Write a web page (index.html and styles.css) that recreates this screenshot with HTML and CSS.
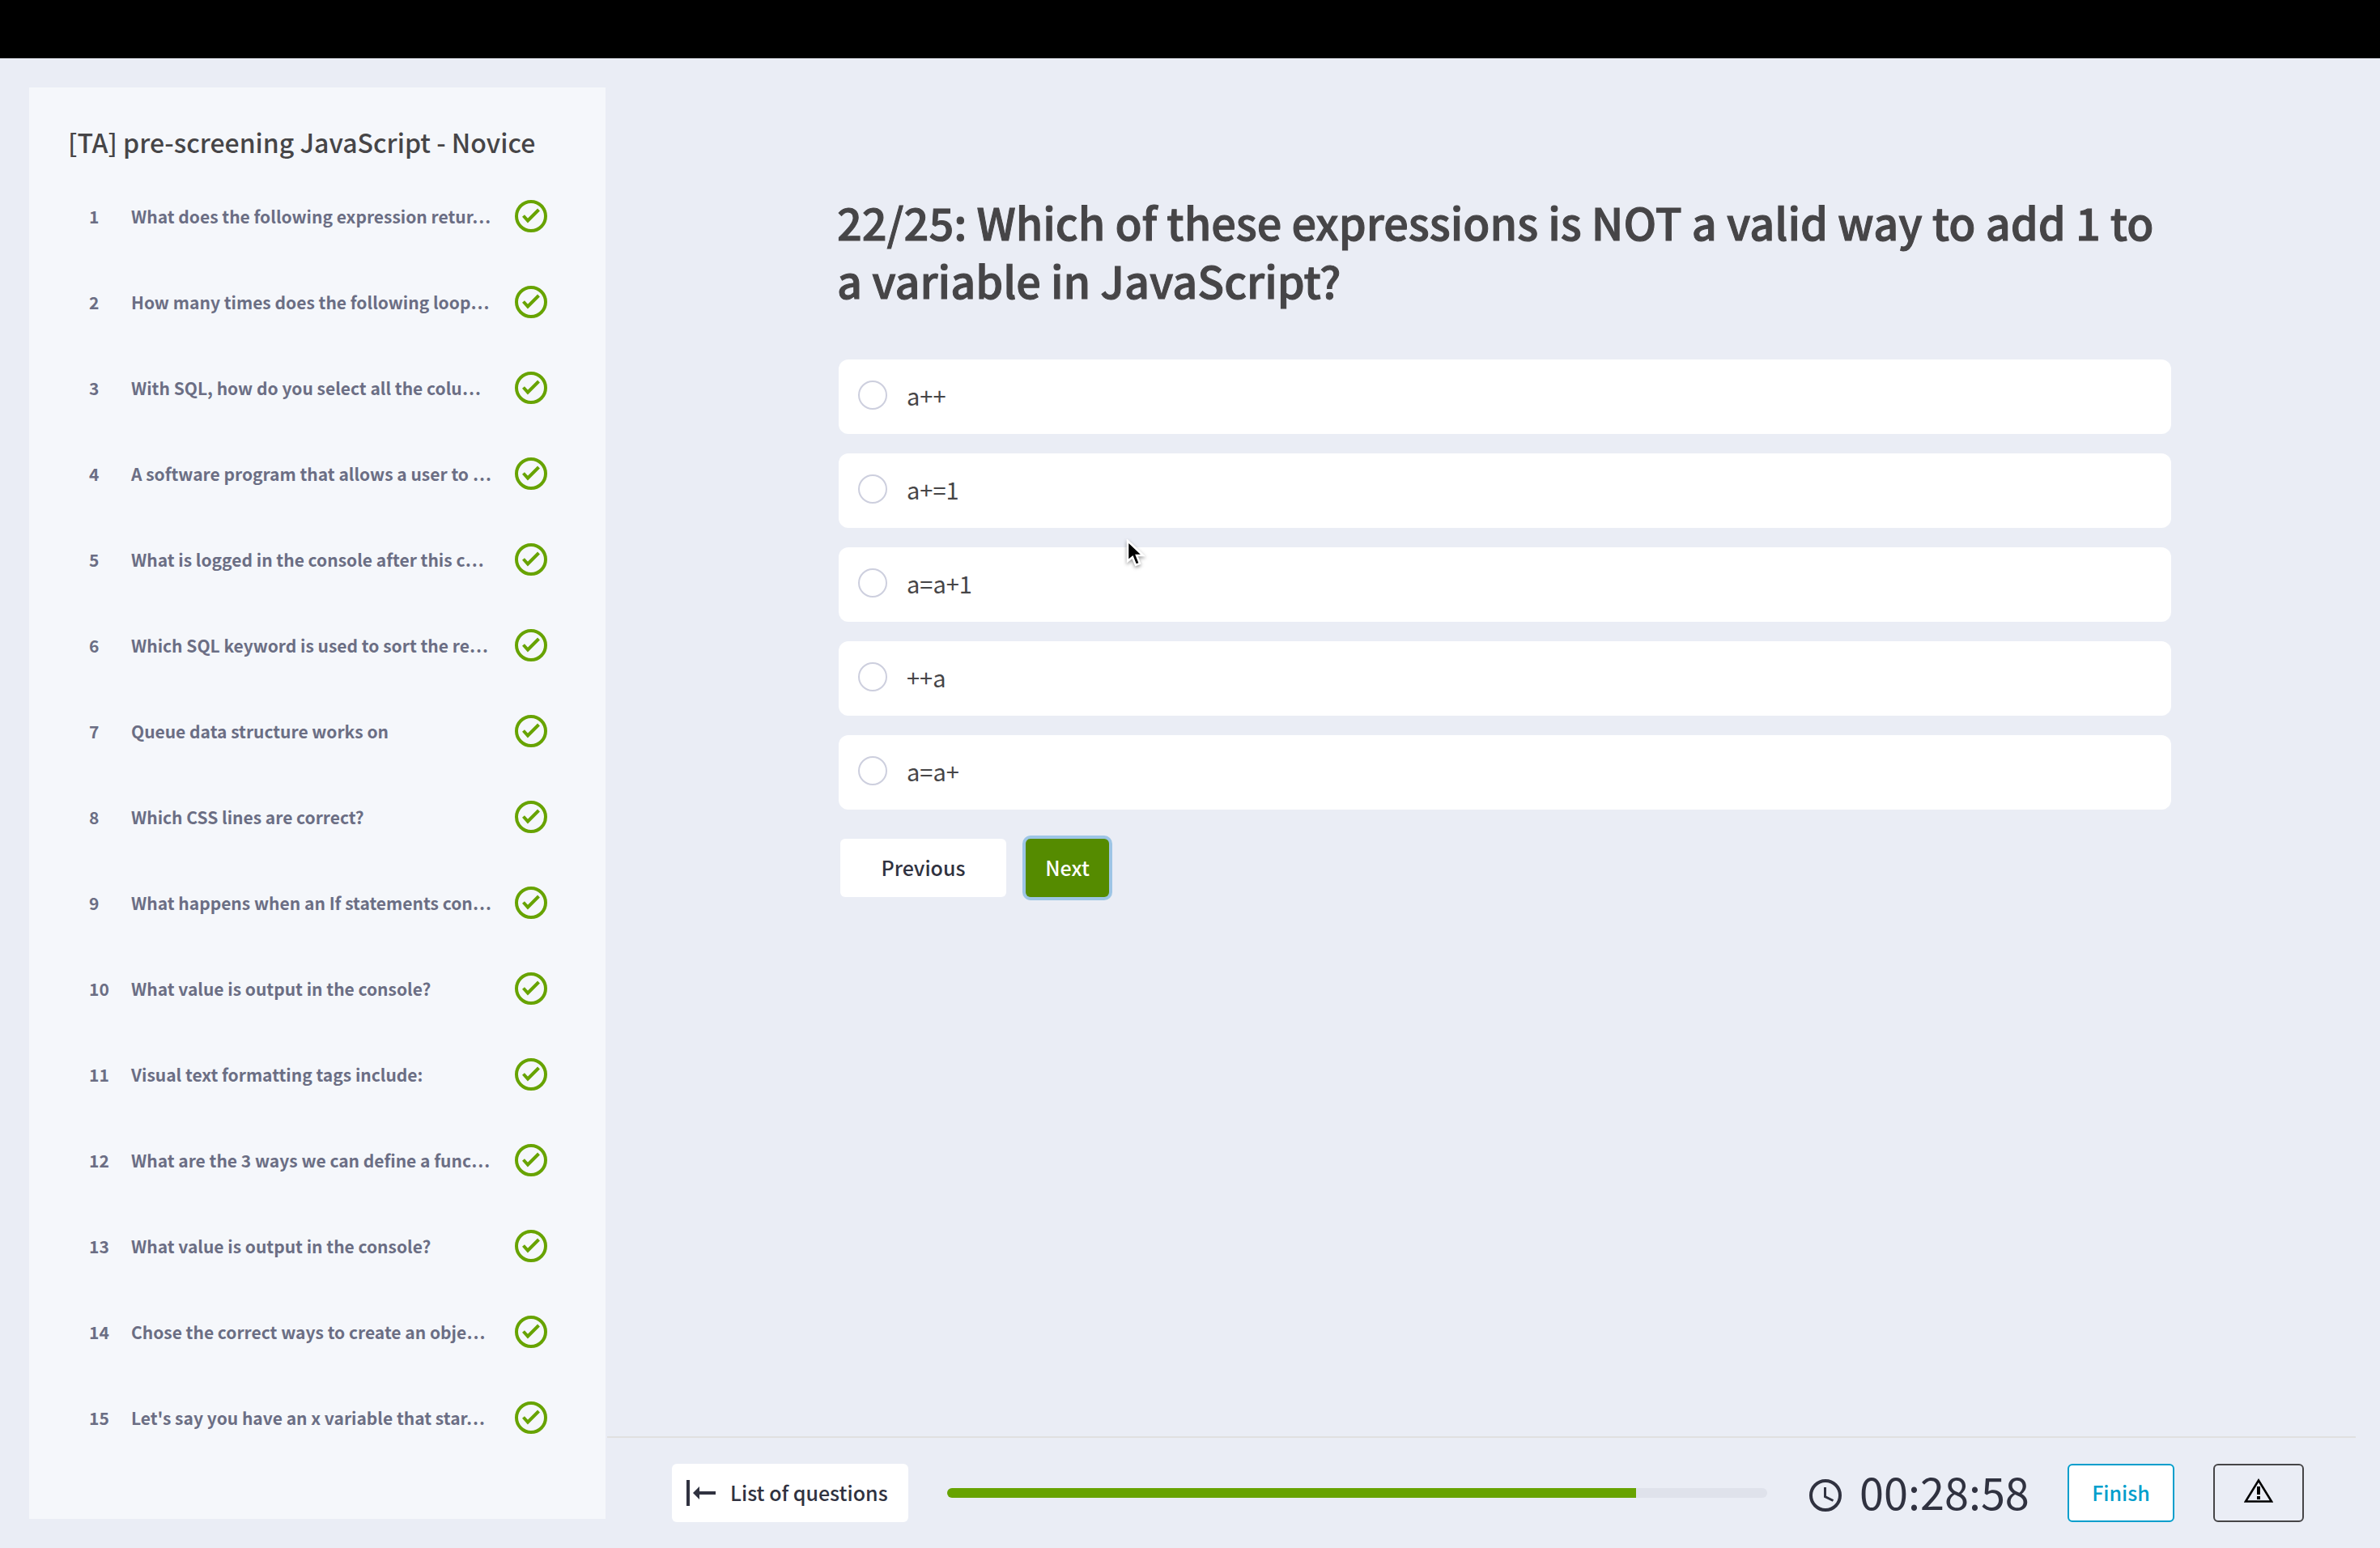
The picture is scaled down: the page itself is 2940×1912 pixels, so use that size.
FILE: index.html
```html
<!DOCTYPE html>
<html lang="en">
<head>
<meta charset="utf-8">
<title>[TA] pre-screening JavaScript - Novice</title>
<link rel="stylesheet" href="styles.css">
</head>
<body>
<svg class="sprite" aria-hidden="true">
  <symbol id="check" viewBox="0 0 40 40"><circle cx="20" cy="20" r="18" fill="none" stroke="currentColor" stroke-width="4"/><path d="M10.500 19.500 16 25.500 29.500 12" fill="none" stroke="currentColor" stroke-width="4"/></symbol>
</svg>
<div class="topbar"></div>
<div class="app">
  <aside class="sidebar">
    <h2 class="test-title">[TA] pre-screening JavaScript - Novice</h2>
    <ol class="questions">
      <li><span class="num">1</span><span class="label">What does the following expression retur…</span><svg class="check"><use href="#check"/></svg></li>
      <li><span class="num">2</span><span class="label">How many times does the following loop…</span><svg class="check"><use href="#check"/></svg></li>
      <li><span class="num">3</span><span class="label">With SQL, how do you select all the colu…</span><svg class="check"><use href="#check"/></svg></li>
      <li><span class="num">4</span><span class="label">A software program that allows a user to …</span><svg class="check"><use href="#check"/></svg></li>
      <li><span class="num">5</span><span class="label">What is logged in the console after this c…</span><svg class="check"><use href="#check"/></svg></li>
      <li><span class="num">6</span><span class="label">Which SQL keyword is used to sort the re…</span><svg class="check"><use href="#check"/></svg></li>
      <li><span class="num">7</span><span class="label">Queue data structure works on</span><svg class="check"><use href="#check"/></svg></li>
      <li><span class="num">8</span><span class="label">Which CSS lines are correct?</span><svg class="check"><use href="#check"/></svg></li>
      <li><span class="num">9</span><span class="label">What happens when an If statements con…</span><svg class="check"><use href="#check"/></svg></li>
      <li><span class="num">10</span><span class="label">What value is output in the console?</span><svg class="check"><use href="#check"/></svg></li>
      <li><span class="num">11</span><span class="label">Visual text formatting tags include:</span><svg class="check"><use href="#check"/></svg></li>
      <li><span class="num">12</span><span class="label">What are the 3 ways we can define a func…</span><svg class="check"><use href="#check"/></svg></li>
      <li><span class="num">13</span><span class="label">What value is output in the console?</span><svg class="check"><use href="#check"/></svg></li>
      <li><span class="num">14</span><span class="label">Chose the correct ways to create an obje…</span><svg class="check"><use href="#check"/></svg></li>
      <li><span class="num">15</span><span class="label">Let's say you have an x variable that star…</span><svg class="check"><use href="#check"/></svg></li>
    </ol>
  </aside>
  <main class="main">
    <section class="question">
      <h1 class="question-title">22/25: Which of these expressions is NOT a valid way to add 1 to a variable in JavaScript?</h1>
      <div class="options">
        <label class="option"><input type="radio" name="answer"><span>a++</span></label>
        <label class="option"><input type="radio" name="answer"><span>a+=1</span></label>
        <label class="option"><input type="radio" name="answer"><span>a=a+1</span></label>
        <label class="option"><input type="radio" name="answer"><span>++a</span></label>
        <label class="option"><input type="radio" name="answer"><span>a=a+</span></label>
      </div>
      <div class="actions">
        <button type="button" class="btn btn-previous">Previous</button>
        <button type="button" class="btn btn-next">Next</button>
      </div>
    </section>
    <footer class="footer">
      <button type="button" class="btn btn-list">
        <svg class="list-icon" viewBox="0 0 36 32" aria-hidden="true"><path d="M0 0h4v32H0zM8 16l8-8v6h20v4H16v6z" fill="currentColor"/></svg>
        List of questions
      </button>
      <div class="progress" role="progressbar" aria-label="Progress" aria-valuenow="84" aria-valuemin="0" aria-valuemax="100"><div class="progress-fill" style="width:84%"></div></div>
      <div class="timer">
        <svg class="clock" viewBox="0 0 40 40" aria-hidden="true"><circle cx="20" cy="20" r="18" fill="none" stroke="currentColor" stroke-width="4"/><path d="M19.500 10v11.500l10 5" fill="none" stroke="currentColor" stroke-width="3"/></svg>
        <span>00:28:58</span>
      </div>
      <button type="button" class="btn btn-finish">Finish</button>
      <button type="button" class="btn btn-report" aria-label="Report a problem">
        <svg class="warning" viewBox="0 0 36 30" aria-hidden="true"><path d="M18 2.500 34 28.500H2z" fill="none" stroke="currentColor" stroke-width="2.500"/><path d="M16 10h4v10h-4zM16 22h4v4h-4z" fill="currentColor"/></svg>
      </button>
    </footer>
  </main>
</div>
<svg class="cursor" viewBox="0 0 24 36" aria-hidden="true"><path d="M2 2v25l6-5 4 10 5-2-4-10h8z" fill="#000" stroke="#fff" stroke-width="2.500"/></svg>
</body>
</html>
```

FILE: styles.css
```css
* { box-sizing: border-box; }

body {
  margin: 0;
  min-height: 100vh;
  display: flex;
  flex-direction: column;
  background: #eaedf5;
  color: #464547;
  font-family: "Noto Sans CJK KR", "Noto Sans", sans-serif;
}

.sprite { display: none; }

.topbar { height: 72px; background: #000; }

.app { flex: 1; display: flex; gap: 2px; padding: 0 30px 0 36px; }

.sidebar {
  flex: 0 0 712px;
  margin: 36px 0;
  padding: 43px 48px 0;
  background: #f5f7fb;
}

.test-title {
  margin: 0;
  font-size: 32px;
  line-height: 48px;
  font-weight: 500;
}

.questions { margin: 21px 0 0; padding: 0; list-style: none; }

.questions li {
  display: flex;
  align-items: flex-start;
  height: 106px;
  padding: 27px 24px 0 26px;
  color: #6b6e84;
  font-size: 21px;
  line-height: 40px;
  font-weight: 600;
}

.num { flex: 0 0 52px; }
.label { flex: 1; white-space: nowrap; }
.check { flex: none; width: 40px; height: 40px; color: #67a300; }

.main { flex: 1; display: flex; flex-direction: column; }

.question { flex: 1; padding: 166px 228px 0 284px; }

.question-title {
  margin: 0;
  font-size: 54px;
  line-height: 72px;
  font-weight: 500;
  -webkit-text-stroke: 1px currentColor;
}

.options { display: grid; gap: 24px; margin: 62px 0 0 2px; }

.option {
  display: flex;
  align-items: flex-start;
  gap: 24px;
  height: 92px;
  padding: 26px 24px;
  border-radius: 12px;
  background: #fff;
  font-size: 29px;
  line-height: 36px;
}

.option input {
  appearance: none;
  flex: none;
  width: 36px;
  height: 36px;
  margin: 0;
  border: 2px solid #cdcfde;
  border-radius: 50%;
  background: #fff;
}

.actions { display: flex; gap: 24px; margin: 36px 4px 0; }

.btn {
  height: 72px;
  padding: 0 0 2px;
  border: 0;
  border-radius: 6px;
  background: #fff;
  color: #303240;
  font-family: inherit;
  font-size: 25px;
  line-height: 36px;
  font-weight: 500;
}

.btn-previous { width: 205px; }
.btn-next { width: 103px; background: #558b00; color: #fff; box-shadow: 0 0 0 4px #9dc5e5; }

.footer {
  display: flex;
  align-items: center;
  padding: 32px 64px 32px 80px;
  border-top: 2px solid #e0e0e0;
}

.btn-list {
  flex: none;
  display: flex;
  align-items: center;
  gap: 18px;
  width: 292px;
  padding-left: 18px;
}

.list-icon { width: 36px; height: 32px; margin-top: 2px; }

.progress {
  flex: 1;
  height: 12px;
  margin: 0 52px 0 48px;
  border-radius: 6px;
  background: #dfe2eb;
}

.progress-fill { height: 12px; border-radius: 6px 0 0 6px; background: #67a300; }

.timer {
  flex: none;
  display: flex;
  align-items: center;
  gap: 22px;
  width: 319px;
  color: #303240;
  font-size: 54px;
  line-height: 68px;
  padding-bottom: 4px;
}

.clock { flex: none; width: 40px; height: 40px; margin-top: 10px; }

.btn-finish {
  width: 132px;
  border: 2px solid #009ecc;
  color: #009ecc;
}

.btn-report {
  width: 112px;
  margin-left: 48px;
  padding: 0;
  border: 2px solid #464547;
  background: none;
  color: #000;
}

.warning { width: 36px; height: 30px; }

.cursor {
  position: absolute;
  left: 1391px;
  top: 666px;
  width: 24px;
  height: 36px;
  filter: drop-shadow(0 2px 2px rgb(0 0 0 / 40%));
}
```
